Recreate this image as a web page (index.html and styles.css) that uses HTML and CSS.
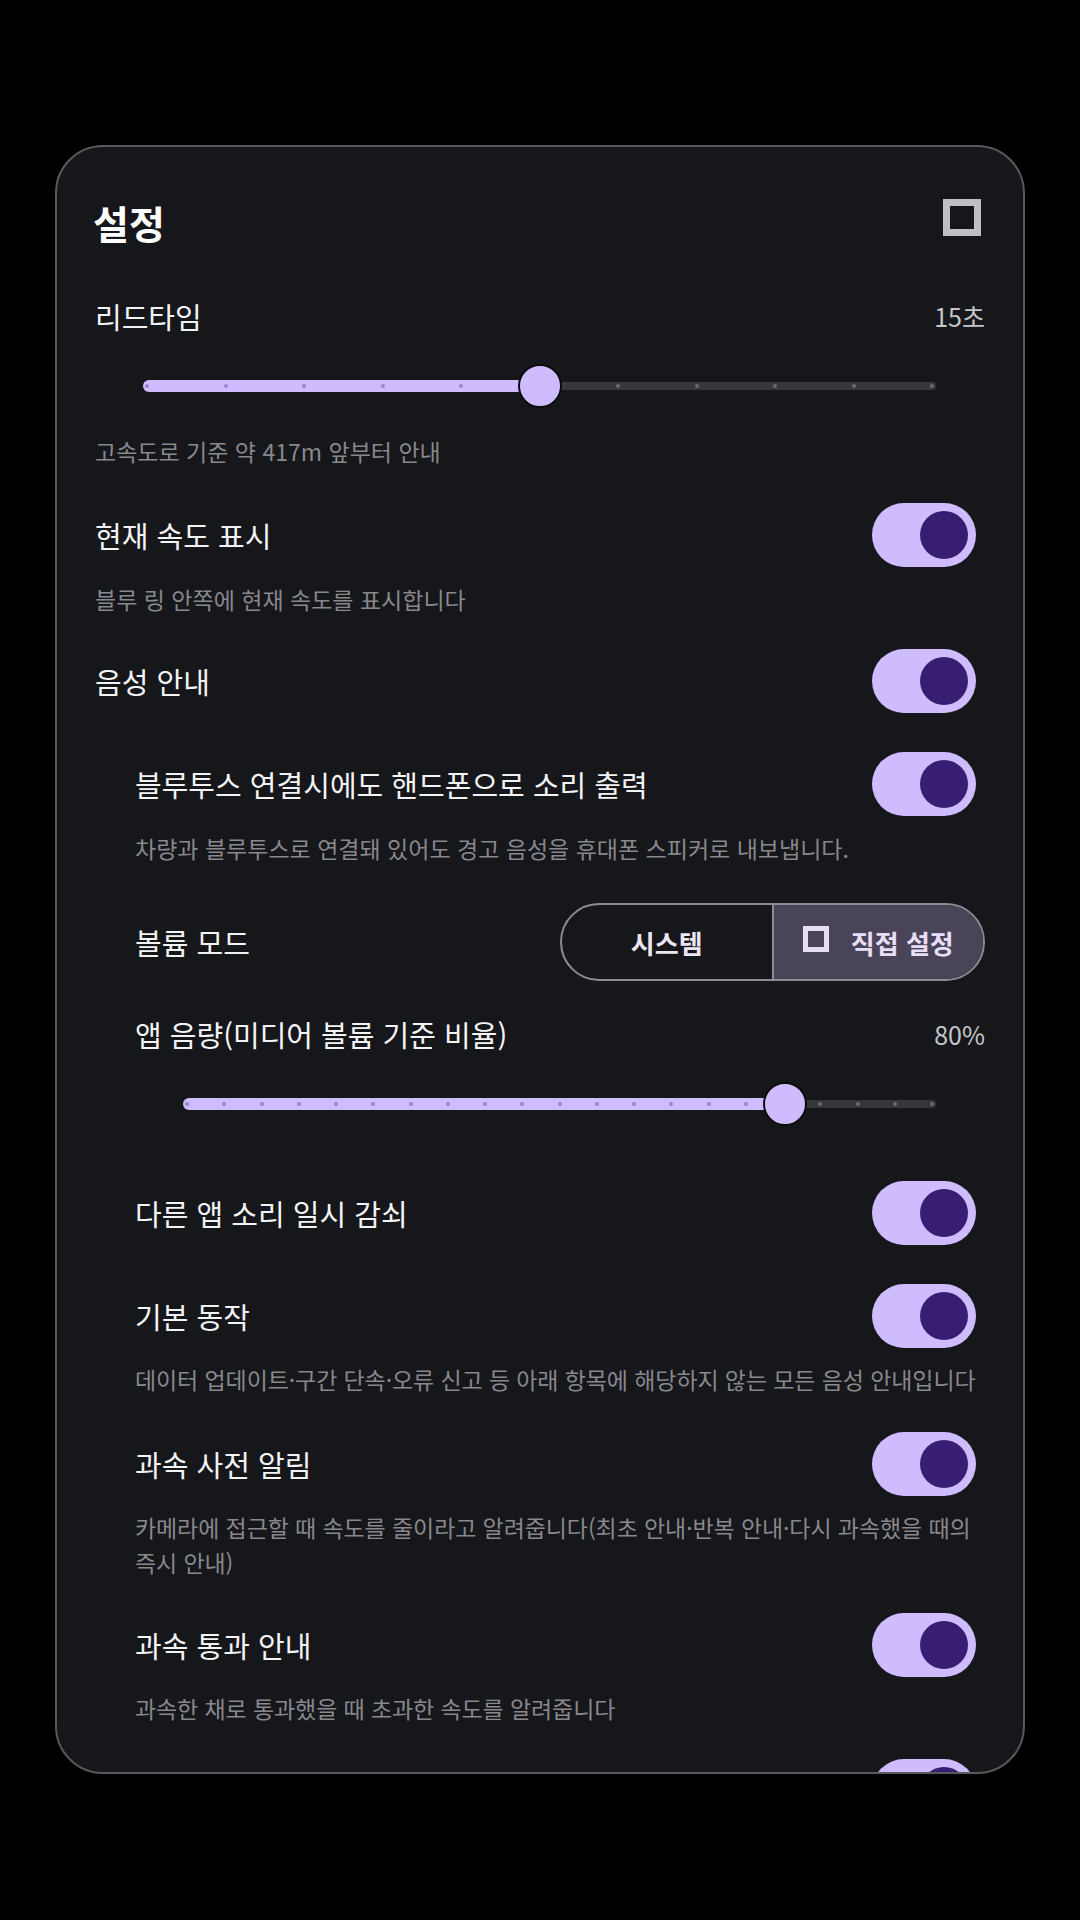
FILE: index.html
```html
<!DOCTYPE html>
<html lang="ko">

<head>
    <meta charset="utf-8">
    <title>설정</title>
    <link rel="stylesheet" href="styles.css">
</head>

<body>
    <div class="settings-card">
        <div class="header">
            <h1>설정</h1>
            <span class="close-box"></span>
        </div>

        <!-- 리드타임 -->
        <div class="label-row first">
            <span class="label">리드타임</span>
            <span class="value">15초</span>
        </div>
        <div class="slider">
            <div class="track">
                <div class="track-active" style="width: 50%"></div>
                <div class="track-rest"></div>
            </div>
            <div class="ticks">
                <i class="on"></i><i class="on"></i><i class="on"></i><i class="on"></i><i class="on"></i>
                <i class="on"></i><i></i><i></i><i></i><i></i><i></i>
            </div>
            <span class="thumb" style="left: 50%"></span>
        </div>
        <p class="desc after-slider">고속도로 기준 약 417m 앞부터 안내</p>

        <div class="toggle-row gap-m">
            <span class="label">현재 속도 표시</span>
            <span class="switch on"><span class="knob"></span></span>
        </div>
        <p class="desc">블루 링 안쪽에 현재 속도를 표시합니다</p>

        <div class="toggle-row gap-s">
            <span class="label">음성 안내</span>
            <span class="switch on"><span class="knob"></span></span>
        </div>

        <div class="sub-settings">
            <div class="toggle-row gap-l">
                <span class="label">블루투스 연결시에도 핸드폰으로 소리 출력</span>
                <span class="switch on"><span class="knob"></span></span>
            </div>
            <p class="desc">차량과 블루투스로 연결돼 있어도 경고 음성을 휴대폰 스피커로 내보냅니다.</p>

            <div class="toggle-row mode-row">
                <span class="label">볼륨 모드</span>
                <div class="segmented">
                    <button class="segment">시스템</button>
                    <button class="segment selected"><span class="check-box"></span>직접 설정</button>
                </div>
            </div>

            <div class="label-row gap-s">
                <span class="label">앱 음량(미디어 볼륨 기준 비율)</span>
                <span class="value">80%</span>
            </div>
            <div class="slider">
                <div class="track">
                    <div class="track-active" style="width: 80%"></div>
                    <div class="track-rest"></div>
                </div>
                <div class="ticks">
                    <i class="on"></i><i class="on"></i><i class="on"></i><i class="on"></i><i class="on"></i>
                    <i class="on"></i><i class="on"></i><i class="on"></i><i class="on"></i><i class="on"></i>
                    <i class="on"></i><i class="on"></i><i class="on"></i><i class="on"></i><i class="on"></i>
                    <i class="on"></i><i class="on"></i><i></i><i></i><i></i><i></i>
                </div>
                <span class="thumb" style="left: 80%"></span>
            </div>

            <div class="toggle-row gap-xl">
                <span class="label">다른 앱 소리 일시 감쇠</span>
                <span class="switch on"><span class="knob"></span></span>
            </div>

            <div class="toggle-row gap-l">
                <span class="label">기본 동작</span>
                <span class="switch on"><span class="knob"></span></span>
            </div>
            <p class="desc tight">데이터 업데이트·구간 단속·오류 신고 등 아래 항목에 해당하지 않는 모든 음성 안내입니다</p>

            <div class="toggle-row gap-m">
                <span class="label">과속 사전 알림</span>
                <span class="switch on"><span class="knob"></span></span>
            </div>
            <p class="desc tight">카메라에 접근할 때 속도를 줄이라고 알려줍니다(최초 안내·반복 안내·다시 과속했을 때의 즉시 안내)</p>

            <div class="toggle-row gap-s">
                <span class="label">과속 통과 안내</span>
                <span class="switch on"><span class="knob"></span></span>
            </div>
            <p class="desc tight">과속한 채로 통과했을 때 초과한 속도를 알려줍니다</p>

            <div class="toggle-row gap-s">
                <span class="label"></span>
                <span class="switch on"><span class="knob"></span></span>
            </div>
        </div>
    </div>
</body>

</html>
```

FILE: styles.css
```css
body {
    margin: 0;
    background-color: #000;
    font-family: "Noto Sans CJK KR", "Noto Sans", sans-serif;
    color: #f2f2f4;
}

.settings-card {
    box-sizing: border-box;
    margin: 145px 55px 0;
    height: 1629px;
    padding: 0 38px;
    background-color: #16171b;
    border: 2px solid #58585d;
    border-radius: 48px;
    overflow: hidden;
}

.header {
    display: flex;
    justify-content: space-between;
    align-items: center;
    height: 50px;
    margin-top: 50px;
}

h1 {
    margin: 0 0 0 -2px;
    font-size: 39px;
    font-weight: bold;
    color: #fff;
}

.close-box {
    width: 24px;
    height: 23px;
    border: 7px solid #bfbfc3;
    margin-right: 4px;
    margin-top: -9px;
}

.label-row,
.toggle-row {
    display: flex;
    justify-content: space-between;
    align-items: center;
}

.label-row {
    height: 40px;
}

.label-row.first {
    margin-top: 49px;
}

.toggle-row {
    height: 64px;
}

.label {
    font-size: 29px;
    color: #f4f4f6;
}

.value {
    font-size: 25px;
    color: #c6c6ca;
}

.desc {
    margin: 15px 0 0;
    font-size: 23px;
    line-height: 34px;
    color: #88888d;
    word-break: keep-all;
}

.desc.tight {
    margin-top: 14px;
    line-height: 35px;
    letter-spacing: -0.1px;
}

.desc.after-slider {
    margin-top: 24px;
}

.gap-s {
    margin-top: 33px;
}

.gap-m {
    margin-top: 35px;
}

.gap-l {
    margin-top: 39px;
}

.gap-xl {
    margin-top: 53px;
}

.sub-settings {
    padding-left: 40px;
}

/* slider */
.slider {
    position: relative;
    height: 48px;
    margin: 26px 49px 0 48px;
}

.track {
    display: flex;
    align-items: center;
    height: 100%;
}

.track-active {
    height: 12px;
    background-color: #cfbcff;
    border-radius: 6px 0 0 6px;
}

.track-rest {
    flex: 1;
    height: 8px;
    background-color: #38373d;
    border-radius: 0 4px 4px 0;
}

.ticks {
    position: absolute;
    top: 22px;
    left: 2px;
    right: 2px;
    display: flex;
    justify-content: space-between;
}

.ticks i {
    width: 4px;
    height: 4px;
    border-radius: 50%;
    background-color: #6c6b72;
}

.ticks i.on {
    background-color: #9b85d2;
}

.thumb {
    position: absolute;
    top: 2px;
    width: 40px;
    height: 40px;
    margin-left: -22px;
    border: 2px solid #0b0b0d;
    border-radius: 50%;
    background-color: #cfbcff;
}

/* switch */
.switch {
    display: flex;
    align-items: center;
    justify-content: flex-end;
    box-sizing: border-box;
    width: 104px;
    height: 64px;
    padding-right: 8px;
    margin-right: 9px;
    border-radius: 32px;
    background-color: #cfbcff;
}

.knob {
    width: 48px;
    height: 48px;
    border-radius: 50%;
    background-color: #381e72;
}

/* volume mode */
.mode-row {
    height: 78px;
    margin-top: 38px;
}

.segmented {
    display: flex;
    width: 425px;
    height: 78px;
    box-sizing: border-box;
    border: 2px solid #8f8b95;
    border-radius: 39px;
    overflow: hidden;
}

.segment {
    flex: 1;
    display: flex;
    align-items: center;
    justify-content: center;
    gap: 22px;
    border: none;
    background: transparent;
    font-family: inherit;
    font-size: 26px;
    font-weight: bold;
    color: #ece6f2;
}

.segment.selected {
    border-left: 2px solid #8f8b95;
    background-color: #4a4458;
    color: #e8def8;
}

.check-box {
    width: 16px;
    height: 16px;
    border: 5px solid #e8def8;
    margin-top: -6px;
}
```
